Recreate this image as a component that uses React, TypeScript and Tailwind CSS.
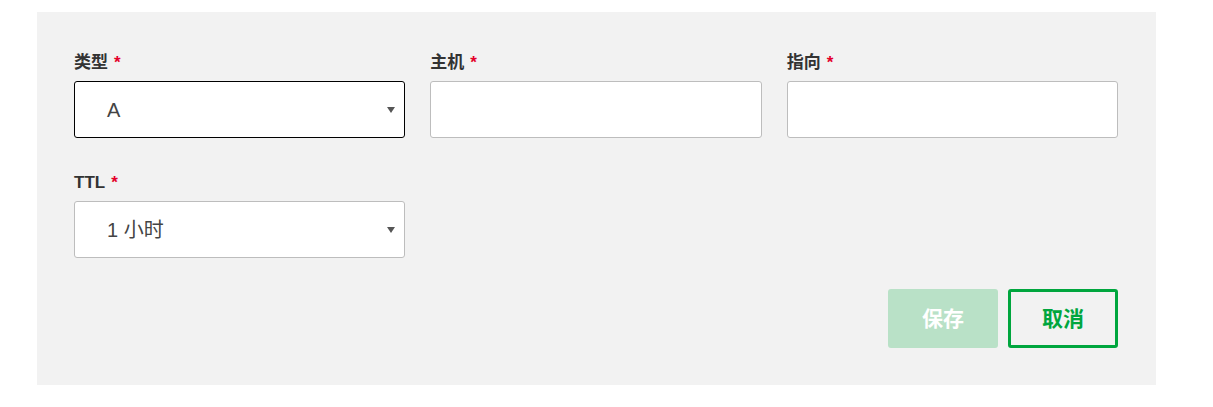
import React from "react";

const font = { fontFamily: '"Liberation Sans", "Noto Sans CJK SC", sans-serif' };

function Label({ text }: { text: string }) {
  return (
    <div className="flex items-center h-[20px] mb-[8px] text-[17px] font-bold text-[#333]">
      <span>{text}</span>
      <span className="ml-[6px] text-[#e4002b]">*</span>
    </div>
  );
}

function Arrow() {
  return (
    <svg width="8" height="6" viewBox="0 0 8 6" className="absolute right-[9px] top-[25px]">
      <path d="M0 0 L8 0 L4 6 Z" fill="#555" />
    </svg>
  );
}

function SelectBox({ value, focused }: { value: string; focused?: boolean }) {
  return (
    <div
      className={`relative h-[57px] bg-white rounded-[3px] border flex items-center pl-[32px] text-[20px] text-[#444] ${
        focused ? "border-black" : "border-[#bdbdbd]"
      }`}
    >
      <span>{value}</span>
      <Arrow />
    </div>
  );
}

function InputBox() {
  return <div className="h-[57px] bg-white rounded-[3px] border border-[#bdbdbd]" />;
}

export default function App() {
  return (
    <div className="w-[1213px] h-[407px] bg-white pt-[12px] pl-[37px]" style={font}>
      <div className="w-[1119px] h-[373px] bg-[#f2f2f2] pt-[41px] pl-[37px] pr-[38px]">
        <div className="grid grid-cols-3 gap-x-[25px]">
          <div>
            <Label text="类型" />
            <SelectBox value="A" focused />
          </div>
          <div>
            <Label text="主机" />
            <InputBox />
          </div>
          <div>
            <Label text="指向" />
            <InputBox />
          </div>
        </div>
        <div className="grid grid-cols-3 gap-x-[25px] mt-[35px]">
          <div>
            <Label text="TTL" />
            <SelectBox value="1 小时" />
          </div>
        </div>
        <div className="flex justify-end gap-[10px] mt-[31px]">
          <button className="w-[110px] h-[59px] rounded-[3px] bg-[#b9e1c7] text-white text-[21px] font-bold">
            保存
          </button>
          <button className="w-[110px] h-[59px] rounded-[3px] border-[3px] border-[#00a63e] text-[#00a63e] text-[21px] font-bold">
            取消
          </button>
        </div>
      </div>
    </div>
  );
}
